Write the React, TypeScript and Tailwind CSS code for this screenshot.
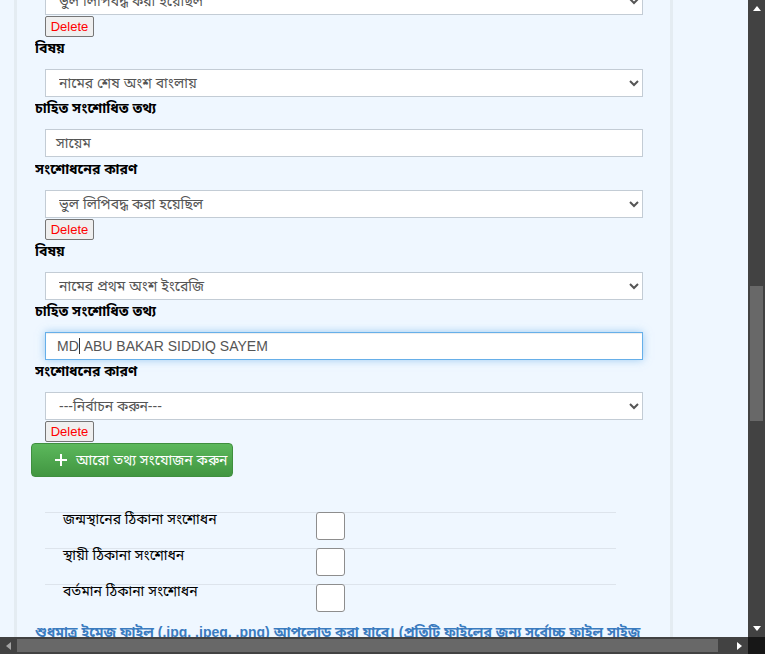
import React from "react";

const bn = "font-['Liberation_Sans','Noto_Sans','Noto_Sans_Bengali',sans-serif]";

function Label({ children }: { children: React.ReactNode }) {
  return (
    <div className="h-[32px] overflow-hidden text-[14px] font-bold leading-[22px] text-black">
      {children}
    </div>
  );
}

function Select({ value }: { value: string }) {
  return (
    <div className="ml-[10px] flex w-[598px]">
      <select
        defaultValue={value}
        className="block h-[28px] w-full border border-[#c3ccd5] bg-white pl-[9px] text-[14px] text-[#555]"
      >
        <option>{value}</option>
      </select>
    </div>
  );
}

function DeleteButton() {
  return (
    <div className="ml-[10px] mt-px flex">
      <button className="block h-[21px] w-[49px] rounded-[2px] border border-[#767676] bg-[#efefef] font-['Liberation_Sans',sans-serif] text-[13px] leading-[19px] text-[#ff0000]">
        Delete
      </button>
    </div>
  );
}

function CheckRow({ label }: { label: string }) {
  return (
    <div className="ml-[10px] flex h-[36px] w-[571px] border-t border-[#dde4ec]">
      <div className="w-[271px] pl-[18px] text-[14px] leading-[12px] text-black">{label}</div>
      <div className="-mt-px h-[28px] w-[29px] rounded-[3px] border border-[#8d8d8d] bg-white" />
    </div>
  );
}

export default function App() {
  return (
    <div className={`flex h-[654px] w-[765px] flex-col overflow-hidden ${bn}`}>
      <div className="flex h-[637px]">
        <div className="flex h-[637px] w-[748px] overflow-hidden bg-[#eff7ff]">
          <div className="w-[14px]" />
          <div className="w-[3px] bg-[#e4ecf2]" />
          <div className="w-[653px] pl-[18px]">
            <div className="-mt-[13px]">
              <Select value="ভুল লিপিবদ্ধ করা হয়েছিল" />
              <DeleteButton />
              <Label>বিষয়</Label>
              <Select value="নামের শেষ অংশ বাংলায়" />
              <Label>চাহিত সংশোধিত তথ্য</Label>
              <div className="ml-[10px] flex h-[28px] w-[598px] items-center border border-[#c3ccd5] bg-white pl-[10px] text-[14px] text-[#555]">
                সায়েম
              </div>
              <div className="h-px" />
              <Label>সংশোধনের কারণ</Label>
              <Select value="ভুল লিপিবদ্ধ করা হয়েছিল" />
              <DeleteButton />
              <Label>বিষয়</Label>
              <Select value="নামের প্রথম অংশ ইংরেজি" />
              <Label>চাহিত সংশোধিত তথ্য</Label>
              <div className="ml-[10px] flex h-[28px] w-[598px] items-center border border-[#66afe9] bg-white pl-[11px] font-['Liberation_Sans',sans-serif] text-[14px] text-[#555] shadow-[inset_0_1px_1px_rgba(0,0,0,0.075),0_0_8px_rgba(102,175,233,0.6)]">
                <span>MD</span>
                <span className="h-[16px] w-px bg-[#333]" />
                <span>&nbsp;ABU BAKAR SIDDIQ SAYEM</span>
              </div>
              <Label>সংশোধনের কারণ</Label>
              <Select value="---নির্বাচন করুন---" />
              <DeleteButton />
              <button className="-ml-[4px] mt-px flex h-[34px] w-[202px] items-center gap-[8px] rounded-[4px] border border-[#3f8f3f] bg-gradient-to-b from-[#5cb85c] to-[#419641] pl-[22px] text-[14px] text-white">
                <svg width="14" height="14" viewBox="0 0 14 14">
                  <path d="M7 1v12M1 7h12" stroke="white" strokeWidth="2" />
                </svg>
                <span>আরো তথ্য সংযোজন করুন</span>
              </button>
              <div className="h-[35px]" />
              <CheckRow label="জন্মস্থানের ঠিকানা সংশোধন" />
              <CheckRow label="স্থায়ী ঠিকানা সংশোধন" />
              <CheckRow label="বর্তমান ঠিকানা সংশোধন" />
              <div className="mt-[2px] whitespace-nowrap text-[14px] font-bold leading-[20px] text-[#3a7bbf]">
                শুধুমাত্র ইমেজ ফাইল (.jpg, .jpeg, .png) আপলোড করা যাবে। (প্রতিটি ফাইলের জন্য সর্বোচ্চ ফাইল সাইজ
              </div>
            </div>
          </div>
          <div className="w-[3px] bg-[#e4ecf2]" />
          <div className="flex-1" />
        </div>
        <div className="flex w-[17px] flex-col items-center bg-[#424242]">
          <div className="flex h-[17px] items-center justify-center">
            <svg width="8" height="5" viewBox="0 0 8 5"><path d="M0 5L4 0L8 5Z" fill="#fff" /></svg>
          </div>
          <div className="h-[269px]" />
          <div className="h-[135px] w-[13px] bg-[#686868]" />
          <div className="flex-1" />
          <div className="flex h-[17px] items-center justify-center">
            <svg width="8" height="5" viewBox="0 0 8 5"><path d="M0 0L8 0L4 5Z" fill="#fff" /></svg>
          </div>
        </div>
      </div>
      <div className="flex h-[17px]">
        <div className="flex w-[748px] items-center bg-[#424242]">
          <div className="flex w-[17px] justify-center">
            <svg width="5" height="8" viewBox="0 0 5 8"><path d="M5 0L5 8L0 4Z" fill="#a3a3a3" /></svg>
          </div>
          <div className="h-[13px] w-[701px] bg-[#686868]" />
          <div className="flex flex-1 justify-end pr-[6px]">
            <svg width="5" height="8" viewBox="0 0 5 8"><path d="M0 0L5 4L0 8Z" fill="#fff" /></svg>
          </div>
        </div>
        <div className="w-[17px] bg-[#171717]" />
      </div>
    </div>
  );
}
